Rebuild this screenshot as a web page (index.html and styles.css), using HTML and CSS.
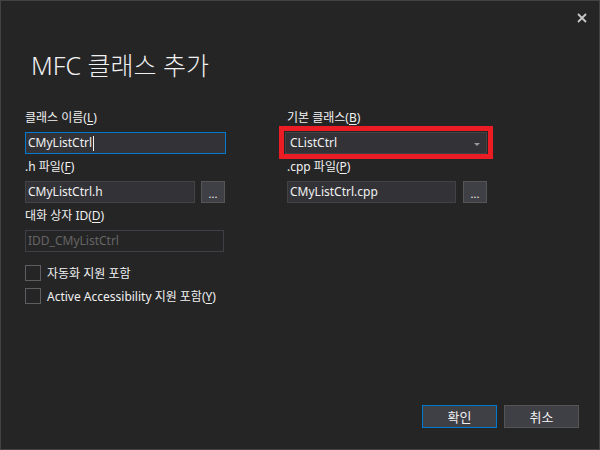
FILE: index.html
```html
<!DOCTYPE html>
<html lang="ko">
<head>
<meta charset="utf-8">
<link rel="stylesheet" href="styles.css">
</head>
<body>
<div class="dialog">
  <button class="close" aria-label="닫기">
    <svg width="10" height="10" viewBox="0 0 10 10"><path d="M1 1 L9 9 M9 1 L1 9" stroke="#c8c8c8" stroke-width="1.8" fill="none"/></svg>
  </button>
  <h1 class="title">MFC 클래스 추가</h1>
  <div class="form">
    <div class="col col-left">
      <label class="label">클래스 이름(<u>L</u>)</label>
      <div class="input input-focus w-201">CMyListCtrl<span class="caret"></span></div>
      <label class="label">.h 파일(<u>F</u>)</label>
      <div class="row">
        <div class="input w-170">CMyListCtrl.h</div>
        <div class="browse">...</div>
      </div>
      <label class="label">대화 상자 ID(<u>D</u>)</label>
      <div class="input input-disabled w-199">IDD_CMyListCtrl</div>
      <div class="checks">
        <div class="check"><span class="box"></span><span>자동화 지원 포함</span></div>
        <div class="check"><span class="box"></span><span>Active Accessibility 지원 포함(<u>Y</u>)</span></div>
      </div>
    </div>
    <div class="col col-right">
      <label class="label indent">기본 클래스(<u>B</u>)</label>
      <div class="combo-wrap">
        <div class="combo">CListCtrl<span class="arrow"></span></div>
        <span class="highlight"></span>
      </div>
      <label class="label indent">.cpp 파일(<u>P</u>)</label>
      <div class="row indent">
        <div class="input w-169">CMyListCtrl.cpp</div>
        <div class="browse">...</div>
      </div>
    </div>
  </div>
  <div class="footer">
    <button class="btn btn-primary">확인</button>
    <button class="btn">취소</button>
  </div>
</div>
</body>
</html>
```
FILE: styles.css
```css
html, body {
  margin: 0;
  background: #252526;
}
body {
  font-family: "Noto Sans", "Noto Sans CJK KR", sans-serif;
  font-size: 12px;
  color: #f1f1f1;
}
.dialog {
  position: relative;
  width: 600px;
  height: 450px;
  box-sizing: border-box;
  border: 1px solid #434346;
  background: #252526;
  padding: 47px 20px 21px 24px;
  display: flex;
  flex-direction: column;
}
.close {
  position: absolute;
  top: 11px;
  right: 11px;
  width: 12px;
  height: 12px;
  padding: 0;
  border: 0;
  background: transparent;
  display: flex;
  align-items: center;
  justify-content: center;
}
.title {
  margin: 0 0 23px 6px;
  font-size: 25px;
  line-height: 34px;
  font-weight: 300;
  color: #f1f1f1;
}
.form {
  display: grid;
  grid-template-columns: 201px 202px;
  column-gap: 59px;
}
.col {
  display: flex;
  flex-direction: column;
}
.label {
  display: block;
  line-height: 16px;
  padding: 5px 0 6px;
  white-space: nowrap;
}
.label u, .check u {
  text-decoration: underline;
  text-underline-offset: 2px;
}
.indent {
  padding-left: 2px;
}
.input {
  box-sizing: border-box;
  height: 22px;
  line-height: 20px;
  padding: 0 2px;
  background: #333337;
  border: 1px solid #434346;
  white-space: nowrap;
  display: flex;
  align-items: center;
}
.w-201 { width: 201px; }
.w-199 { width: 199px; }
.w-170 { width: 170px; }
.w-169 { width: 169px; }
.input-focus {
  border-color: #007acc;
}
.caret {
  display: inline-block;
  width: 1px;
  height: 15px;
  background: #f1f1f1;
  margin-left: 1px;
}
.input-disabled {
  background: #252526;
  border-color: #3f3f46;
  color: #656565;
}
.row {
  display: flex;
  gap: 6px;
}
.col-right .row {
  gap: 7px;
}
.browse {
  box-sizing: border-box;
  width: 24px;
  height: 22px;
  background: #3f3f46;
  border: 1px solid #555555;
  text-align: center;
  line-height: 24px;
  font-size: 11px;
  letter-spacing: 0;
}
.combo-wrap {
  position: relative;
  width: 202px;
  height: 22px;
}
.combo {
  box-sizing: border-box;
  height: 22px;
  line-height: 20px;
  padding: 0 4px;
  background: #333337;
  border: 1px solid #434346;
  position: relative;
}
.arrow {
  position: absolute;
  right: 6px;
  top: 10px;
  width: 0;
  height: 0;
  border-left: 3px solid transparent;
  border-right: 3px solid transparent;
  border-top: 3px solid #999999;
}
.highlight {
  position: absolute;
  top: -6px;
  left: -6px;
  right: -6px;
  bottom: -5px;
  border: 5px solid #ec1c24;
  pointer-events: none;
}
.checks {
  margin-top: 13px;
  display: flex;
  flex-direction: column;
  gap: 7px;
}
.check {
  display: flex;
  align-items: center;
  gap: 6px;
  white-space: nowrap;
  height: 16px;
}
.box {
  box-sizing: border-box;
  width: 16px;
  height: 16px;
  border: 1px solid #5e5e62;
  flex: none;
}
.footer {
  margin-top: auto;
  display: flex;
  justify-content: flex-end;
  gap: 7px;
}
.btn {
  box-sizing: border-box;
  width: 75px;
  height: 23px;
  padding: 0;
  background: #3f3f46;
  border: 1px solid #555555;
  color: #f1f1f1;
  font-family: "Noto Sans CJK KR", sans-serif;
  font-size: 13px;
  line-height: 20px;
}
.btn-primary {
  border-color: #007acc;
}
```
